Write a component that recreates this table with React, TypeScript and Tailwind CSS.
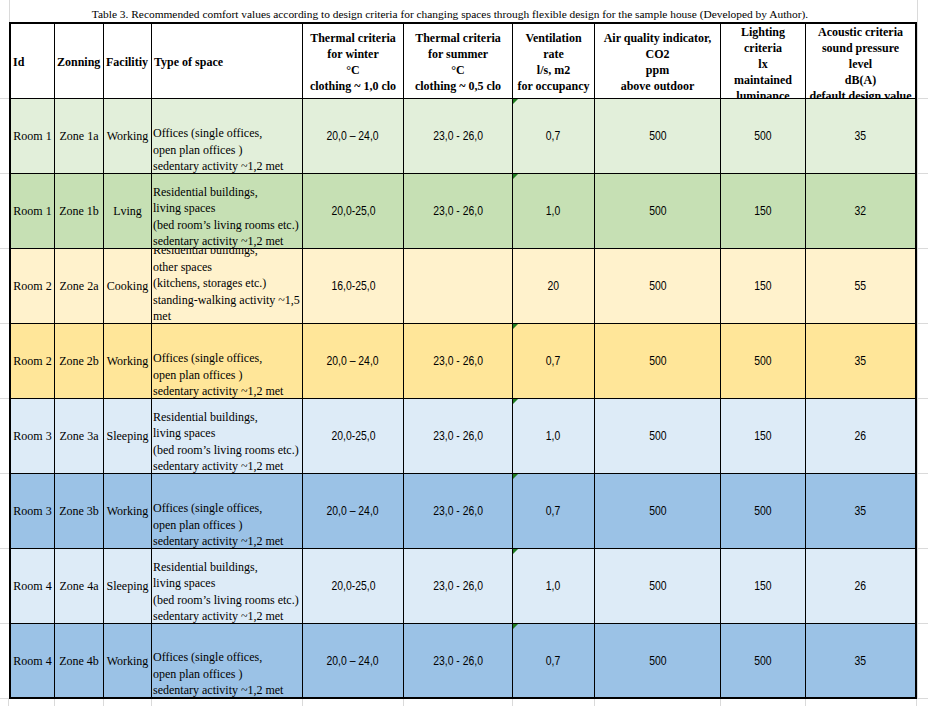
import React from 'react';

type Row = {
  id: string;
  zone: string;
  facility: string;
  type: string[];
  winter: string;
  summer: string;
  vent: string;
  air: string;
  light: string;
  sound: string;
  bg: string;
  flag: boolean;
};

const offices = ['Offices (single offices,', 'open plan offices )', 'sedentary activity ~1,2 met'];
const living = [
  'Residential buildings,',
  'living spaces',
  '(bed room’s living rooms etc.)',
  'sedentary activity ~1,2 met',
];
const other = [
  'Residential buildings,',
  'other spaces',
  '(kitchens, storages etc.)',
  'standing-walking activity ~1,5',
  'met',
];

const rows: Row[] = [
  { id: 'Room 1', zone: 'Zone 1a', facility: 'Working', type: offices, winter: '20,0 – 24,0', summer: '23,0 - 26,0', vent: '0,7', air: '500', light: '500', sound: '35', bg: 'bg-[#e2efda]', flag: true },
  { id: 'Room 1', zone: 'Zone 1b', facility: 'Lving', type: living, winter: '20,0-25,0', summer: '23,0 - 26,0', vent: '1,0', air: '500', light: '150', sound: '32', bg: 'bg-[#c6e0b4]', flag: true },
  { id: 'Room 2', zone: 'Zone 2a', facility: 'Cooking', type: other, winter: '16,0-25,0', summer: '', vent: '20', air: '500', light: '150', sound: '55', bg: 'bg-[#fff2cc]', flag: false },
  { id: 'Room 2', zone: 'Zone 2b', facility: 'Working', type: offices, winter: '20,0 – 24,0', summer: '23,0 - 26,0', vent: '0,7', air: '500', light: '500', sound: '35', bg: 'bg-[#ffe699]', flag: true },
  { id: 'Room 3', zone: 'Zone 3a', facility: 'Sleeping', type: living, winter: '20,0-25,0', summer: '23,0 - 26,0', vent: '1,0', air: '500', light: '150', sound: '26', bg: 'bg-[#ddebf7]', flag: true },
  { id: 'Room 3', zone: 'Zone 3b', facility: 'Working', type: offices, winter: '20,0 – 24,0', summer: '23,0 - 26,0', vent: '0,7', air: '500', light: '500', sound: '35', bg: 'bg-[#9bc2e6]', flag: true },
  { id: 'Room 4', zone: 'Zone 4a', facility: 'Sleeping', type: living, winter: '20,0-25,0', summer: '23,0 - 26,0', vent: '1,0', air: '500', light: '150', sound: '26', bg: 'bg-[#ddebf7]', flag: true },
  { id: 'Room 4', zone: 'Zone 4b', facility: 'Working', type: offices, winter: '20,0 – 24,0', summer: '23,0 - 26,0', vent: '0,7', air: '500', light: '500', sound: '35', bg: 'bg-[#9bc2e6]', flag: true },
];

const serif = "font-['Liberation_Serif','Times_New_Roman',serif]";
const sans = "font-['Liberation_Sans',Arial,sans-serif]";

// header cells: lines of bold text, centred
const headers: { lines: string[]; left?: boolean; tall?: boolean }[] = [
  { lines: ['Id'], left: true },
  { lines: ['Zonning'], left: true },
  { lines: ['Facilitiy'], left: true },
  { lines: ['Type of space'], left: true },
  { lines: ['Thermal criteria', 'for winter', '°C', 'clothing ~ 1,0 clo'] },
  { lines: ['Thermal criteria', 'for summer', '°C', 'clothing ~ 0,5 clo'] },
  { lines: ['Ventilation', 'rate', 'l/s, m2', 'for occupancy'] },
  { lines: ['Air quality indicator,', 'CO2', 'ppm', 'above outdoor'] },
  { lines: ['Lighting', 'criteria', 'lx', 'maintained', 'luminance'], tall: true },
  { lines: ['Acoustic criteria', 'sound pressure', 'level', 'dB(A)', 'default design value'], tall: true },
];

// outer border on the first / last column, thin rule between the rest
const sideBorder = (i: number) =>
  i === 0 ? 'border-l-2 border-r' : i === 9 ? 'border-r-2' : 'border-r';

const Gutter: React.FC<{ right?: boolean }> = ({ right }) => (
  <div className={right ? 'border-l border-b border-[#dadada]' : 'border-b border-[#dadada]'} />
);

// numbers in the sheet use a narrow sans face
const Num: React.FC<{ children: React.ReactNode }> = ({ children }) => (
  <span className={`inline-block whitespace-nowrap scale-x-[0.8] ${sans} text-[13px]`}>{children}</span>
);

const App: React.FC = () => {
  return (
    <div
      className={`w-[928px] h-[706px] overflow-hidden bg-white text-black grid grid-cols-[9px_46px_49px_48px_151px_101px_109px_82px_126px_85px_111px_1fr] grid-rows-[22px_77px_repeat(8,75px)_1fr] ${serif}`}
    >
      {/* title row */}
      <div />
      <div className="col-span-10 border-l border-[#dadada] flex items-end justify-center pr-[27px] text-[11.4px] leading-[16px] whitespace-nowrap">
        Table 3. Recommended comfort values according to design criteria for changing spaces through flexible design for the sample house (Developed by Author).
      </div>
      <div className="border-l border-[#dadada]" />

      {/* header row */}
      <Gutter />
      {headers.map((h, i) => (
        <div
          key={i}
          className={`bg-white border-black border-t-2 border-b ${sideBorder(i)} overflow-hidden flex flex-col justify-center font-bold text-[12px] leading-[16px] whitespace-nowrap ${
            h.left ? 'items-start pl-[2px] pt-[1px]' : 'items-center'
          } ${h.tall ? 'pt-[6px]' : h.left ? '' : 'pt-[2px]'}`}
        >
          {h.lines.map((l, k) => (
            <div key={k}>{l}</div>
          ))}
        </div>
      ))}
      <Gutter right />

      {/* body rows */}
      {rows.map((r, ri) => {
        const last = ri === rows.length - 1;
        const base = `${r.bg} border-black ${last ? 'border-b-2' : 'border-b'} overflow-hidden`;
        const num = `${base} flex items-center justify-center`;
        return (
          <React.Fragment key={ri}>
            <Gutter />
            <div className={`${base} ${sideBorder(0)} flex items-center justify-center text-[12px] whitespace-nowrap`}>{r.id}</div>
            <div className={`${base} ${sideBorder(1)} flex items-center justify-center text-[12px] whitespace-nowrap`}>{r.zone}</div>
            <div className={`${base} ${sideBorder(2)} flex items-center justify-center text-[12px] whitespace-nowrap`}>{r.facility}</div>
            <div className={`${base} ${sideBorder(3)} flex flex-col justify-end pl-[1px] text-[12px] leading-[16.6px] whitespace-nowrap`}>
              <div className="translate-y-[2px]">
                {r.type.map((l, k) => (
                  <div key={k}>{l}</div>
                ))}
              </div>
            </div>
            <div className={`${num} ${sideBorder(4)}`}>
              <Num>{r.winter}</Num>
            </div>
            <div className={`${num} ${sideBorder(5)}`}>
              <Num>{r.summer}</Num>
            </div>
            <div className={`${num} ${sideBorder(6)} relative`}>
              {r.flag && (
                <span className="absolute top-0 left-0 w-0 h-0 border-t-[5px] border-r-[5px] border-t-[#1e7b1e] border-r-transparent" />
              )}
              <Num>{r.vent}</Num>
            </div>
            <div className={`${num} ${sideBorder(7)}`}>
              <Num>{r.air}</Num>
            </div>
            <div className={`${num} ${sideBorder(8)}`}>
              <Num>{r.light}</Num>
            </div>
            <div className={`${num} ${sideBorder(9)}`}>
              <Num>{r.sound}</Num>
            </div>
            <Gutter right />
          </React.Fragment>
        );
      })}

      {/* empty sheet row below the table */}
      <div className="border-r border-[#dadada]" />
      {headers.map((_, i) => (
        <div key={i} className="border-r border-[#dadada]" />
      ))}
      <div />
    </div>
  );
};

export default App;
